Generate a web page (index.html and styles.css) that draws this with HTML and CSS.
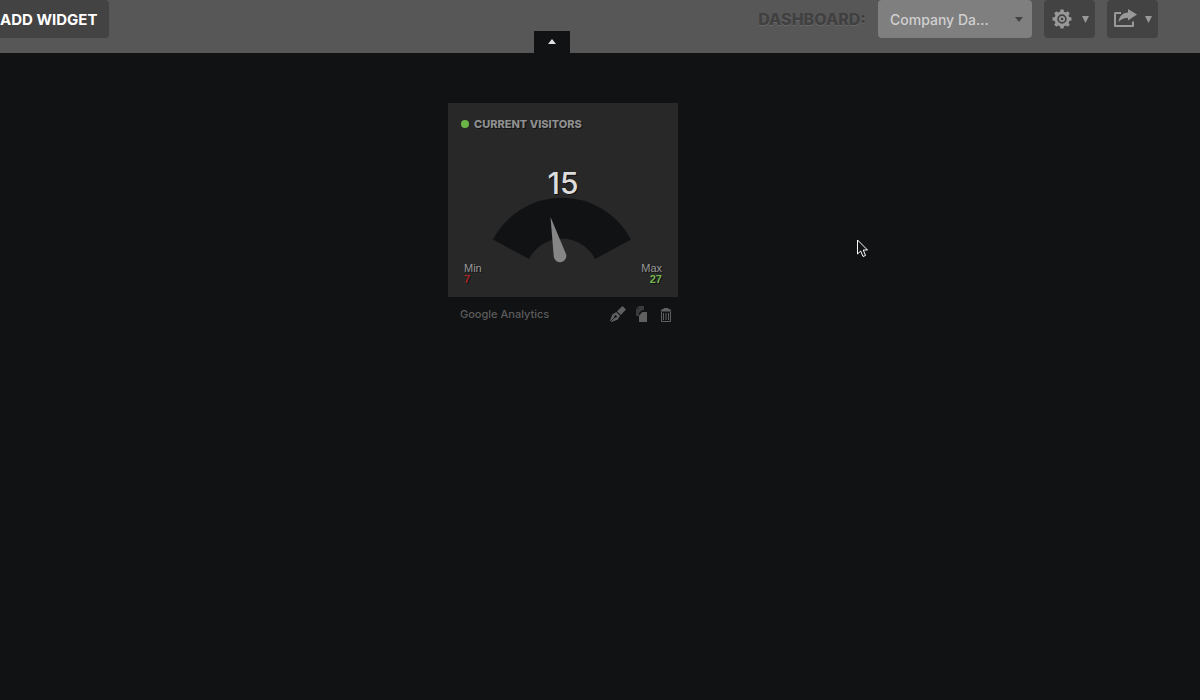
FILE: index.html
```html
<!DOCTYPE html>
<html lang="en">
<head>
<meta charset="utf-8">
<meta name="viewport" content="width=device-width, initial-scale=1">
<title>Company Dashboard</title>
<link rel="stylesheet" href="styles.css">
</head>
<body>
<header class="toolbar">
  <button class="add-widget" type="button">ADD WIDGET</button>
  <div class="tools">
    <label class="dash-label" for="dashboard">DASHBOARD:</label>
    <div class="picker">
      <select id="dashboard" class="picker-select"><option>Company Da...</option></select>
      <svg class="picker-caret" width="8" height="5" viewBox="0 0 8 5" aria-hidden="true"><path d="M0 0h8L4 5z"/></svg>
    </div>
    <button class="tool" type="button" aria-label="Settings">
      <svg width="20" height="20" viewBox="0 0 20 20" aria-hidden="true">
        <g fill="currentColor">
          <path id="cog" d="M8 3L8.500.5h3L12 3v14l-.5 2.500h-3L8 17zM3 8L.5 8.500v3L3 12h14l2.500-.5v-3L17 8z"/>
          <use href="#cog" transform="rotate(45 10 10)"/>
          <circle cx="10" cy="10" r="7.500"/>
        </g>
        <circle cx="10" cy="10" r="3.900" fill="none" stroke="#434343" stroke-width="1.700"/>
        <circle cx="10" cy="10" r="1.300" fill="#434343"/>
      </svg>
      <svg class="tool-caret" width="7" height="7" viewBox="0 0 7 7" aria-hidden="true"><path fill="currentColor" d="M0 0h7L3.5 7z"/></svg>
    </button>
    <button class="tool" type="button" aria-label="Share">
      <svg width="24" height="20" viewBox="0 0 24 20" aria-hidden="true">
        <path fill="none" stroke="currentColor" stroke-width="2" d="M7 4H1.200Q1 4 1 4.500v12.300q0 .2.200.2h17.600q.2 0 .2-.2V12.500"/>
        <path fill="currentColor" d="M14 0l9 5.500-9 6V9C10 8.700 7.500 10 4.500 13 5 7.500 9 3.600 14 3.500z"/>
      </svg>
      <svg class="tool-caret" width="7" height="7" viewBox="0 0 7 7" aria-hidden="true"><path fill="currentColor" d="M0 0h7L3.5 7z"/></svg>
    </button>
  </div>
  <button class="collapse" type="button" aria-label="Collapse toolbar">
    <svg width="8" height="5" viewBox="0 0 8 5" aria-hidden="true"><path fill="currentColor" d="M4 0l4 5H0z"/></svg>
  </button>
</header>
<main class="canvas">
  <article class="widget">
    <div class="card">
      <h2 class="title"><span class="status"></span>CURRENT VISITORS</h2>
      <div class="value">15</div>
      <svg class="gauge" viewBox="0 0 230 66" aria-hidden="true">
        <path fill="#111214" d="M45 42.500A78 78 0 0 1 183 42.500L147 62A37 37 0 0 0 81 62Z"/>
        <path fill="#868686" d="M102.500 20L118 57A6.300 6.300 0 1 1 105.800 60Z"/>
      </svg>
      <dl class="range">
        <div><dt>Min</dt><dd class="low">7</dd></div>
        <div class="max"><dt>Max</dt><dd class="high">27</dd></div>
      </dl>
    </div>
    <footer class="foot">
      <span class="source">Google Analytics</span>
      <button class="action" type="button" aria-label="Edit">
        <svg width="16" height="16" viewBox="0 0 16 16" aria-hidden="true">
          <path fill="currentColor" d="M12.500 0L16 3.500 10.800 9 7 5.200zM6.300 5.900L10.100 9.700 7.500 13.800 1.500 16 0 14.700 2.300 8.500z"/>
          <path stroke="#111214" stroke-width=".8" d="M1 15l4-4" fill="none"/><circle cx="5.500" cy="10.500" r="1.200" fill="#111214"/>
        </svg>
      </button>
      <button class="action" type="button" aria-label="Duplicate">
        <svg width="16" height="16" viewBox="0 0 16 16" aria-hidden="true">
          <path fill="#3b3b3b" d="M4.500 0H10v4H8L5 7v3H2V3z"/>
          <path fill="currentColor" d="M8.500 6H13v10H5V9.500z"/>
          <path stroke="#222" stroke-width=".7" d="M2 3h2.500V0" fill="none"/>
        </svg>
      </button>
      <button class="action" type="button" aria-label="Delete">
        <svg width="16" height="16" viewBox="0 0 16 16" aria-hidden="true">
          <path fill="none" stroke="currentColor" d="M6 3.500v-1h4v1M3.500 6v9.500h9V6M5.500 7v7M8 7v7M10.500 7v7"/>
          <path fill="currentColor" d="M4 3h8l1.500 2.500h-11z"/>
        </svg>
      </button>
    </footer>
  </article>
  <svg class="pointer" width="12" height="19" viewBox="0 0 12 19" aria-hidden="true">
    <path fill="#111214" stroke="#fff" d="M.5 1v14l3.200-3 2.300 5.500 2.500-1L6.300 11H10.500z"/>
  </svg>
</main>
</body>
</html>
```
FILE: styles.css
```css
* { box-sizing: border-box; }

body {
  margin: 0;
  min-height: 100vh;
  background: #111214;
  font-family: Inter, "Liberation Sans", sans-serif;
}

button {
  margin: 0;
  border: 0;
  padding: 0;
  font: inherit;
}

svg { display: block; }

.toolbar {
  position: relative;
  display: flex;
  justify-content: space-between;
  align-items: flex-start;
  padding: 0 42px 15px 0;
  background: #575757;
}

.add-widget {
  height: 38px;
  padding: 0 12px 0 0;
  border-radius: 0 4px 4px 0;
  background: #434343;
  color: #fff;
  font-size: 15px;
  font-weight: 700;
}

.tools {
  display: flex;
  align-items: center;
  gap: 12px;
}

.dash-label {
  color: #404040;
  font-size: 16px;
  font-weight: 800;
  text-shadow: 0 1px 0 #686868;
}

.picker {
  display: flex;
  position: relative;
}

.picker-select {
  appearance: none;
  width: 154px;
  height: 38px;
  border: 0;
  border-radius: 4px;
  padding: 0 12px;
  background: #7f7f7f;
  color: #d0d0d0;
  font: 500 14px Inter, "Liberation Sans", sans-serif;
}

.picker-caret {
  position: absolute;
  right: 9px;
  top: 17px;
  fill: #444;
  pointer-events: none;
}

.tool {
  display: flex;
  align-items: center;
  justify-content: space-between;
  width: 51px;
  height: 38px;
  padding: 0 6px 0 8px;
  border-radius: 4px;
  background: #434343;
  color: #999;
}

.tool:last-child { padding-left: 7px; }

.collapse {
  position: absolute;
  left: 46%;
  bottom: 0;
  display: flex;
  justify-content: center;
  width: 36px;
  height: 22px;
  margin-left: -18px;
  padding-top: 8px;
  background: #111214;
  color: #e0e0e0;
}

.canvas {
  display: flex;
  justify-content: center;
  padding: 50px 74px 0 0;
}

.widget { width: 230px; }

.card {
  padding: 13px 0 12px;
  background: #282828;
}

.title {
  display: flex;
  align-items: center;
  gap: 5px;
  margin: 0;
  padding: 0 13px;
  color: #8e8e8e;
  font-size: 11px;
  font-weight: 800;
  line-height: 16px;
  text-shadow: 1px 1px 0 #111;
}

.status {
  width: 8px;
  height: 8px;
  border-radius: 50%;
  background: #6ab545;
}

.value {
  margin-top: 37px;
  color: #ddd;
  font-size: 30px;
  font-weight: 500;
  line-height: 28px;
  text-align: center;
  text-shadow: 1px 1px 0 #111;
}

.gauge { width: 100%; }

.range {
  display: flex;
  justify-content: space-between;
  margin: 0;
  padding: 0 16px;
  color: #999;
  font-family: "Liberation Sans", Arial, sans-serif;
  font-size: 11px;
  line-height: 11px;
  text-shadow: 1px 1px 0 #111;
}

.range dd {
  margin: 0;
  font-weight: 700;
}

.max { text-align: right; }
.low { color: #a8282b; }
.high { color: #74b650; }

.foot {
  display: flex;
  align-items: center;
  gap: 8px;
  padding: 9px 4px 0 12px;
}

.source {
  flex: 1;
  color: #5c5c5c;
  font-size: 11px;
  font-weight: 500;
  line-height: 16px;
}

.action {
  background: none;
  color: #606060;
}

.pointer {
  position: absolute;
  left: 857px;
  top: 239px;
}
```
